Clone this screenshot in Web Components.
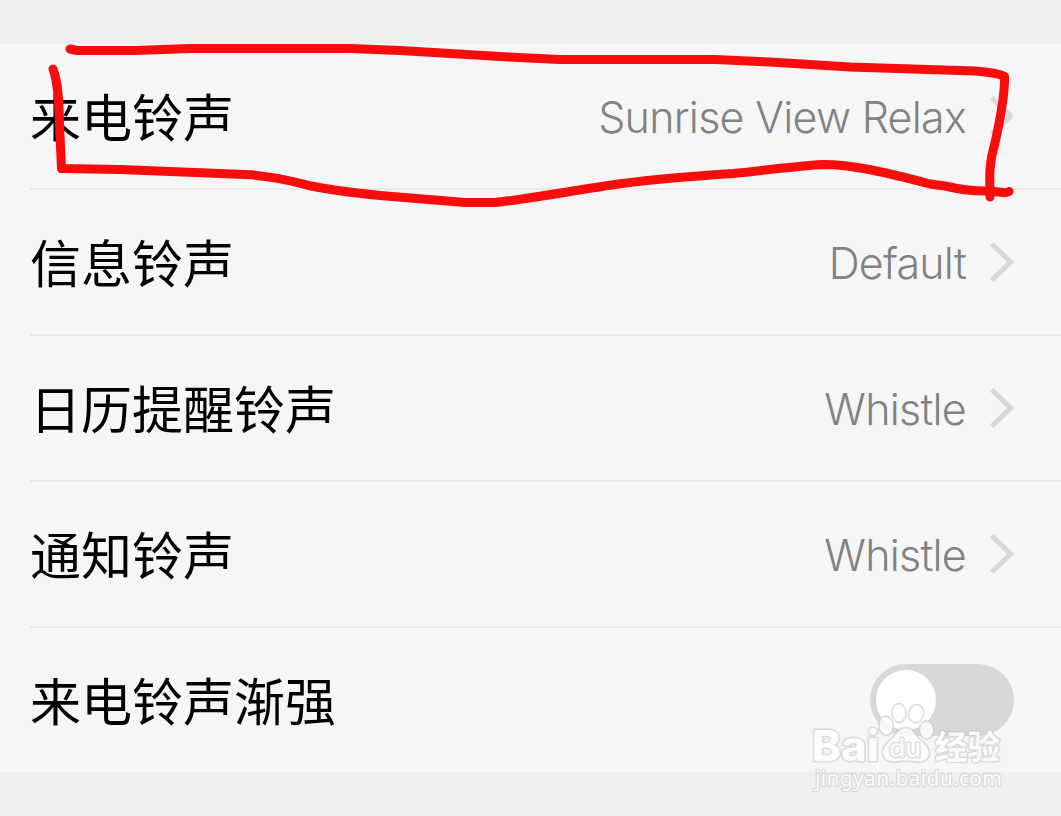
<!DOCTYPE html>
<html lang="zh-CN">
<head>
<meta charset="UTF-8">
<title>铃声设置</title>
<style>
  body {
    margin: 0;
    background: #efefef;
    font-family: Inter, "Noto Sans CJK SC", sans-serif;
  }
</style>
</head>
<body>
<ringtone-page>
  <setting-row label="来电铃声" value="Sunrise View Relax"></setting-row>
  <setting-row label="信息铃声" value="Default"></setting-row>
  <setting-row label="日历提醒铃声" value="Whistle"></setting-row>
  <setting-row label="通知铃声" value="Whistle"></setting-row>
  <setting-row label="来电铃声渐强"><toggle-switch></toggle-switch></setting-row>
  <red-marker slot="overlay"></red-marker>
  <site-watermark slot="overlay"></site-watermark>
</ringtone-page>

<script>
// Page shell: grey background with the list panel
class RingtonePage extends HTMLElement {
  constructor() {
    super();
    this.attachShadow({ mode: 'open' });
    this.shadowRoot.innerHTML = `
      <style>
        :host {
          display: block;
          position: relative;
          box-sizing: border-box;
          width: 1061px;
          height: 816px;
          padding: 44px 0;
          overflow: hidden;
          background: #efefef;
        }
        .list {
          display: flex;
          flex-direction: column;
          background: #f6f6f6;
        }
      </style>
      <div class="list"><slot></slot></div>
      <slot name="overlay"></slot>
    `;
  }
}
customElements.define('ringtone-page', RingtonePage);

// One row: label on the left, value + chevron or a control on the right
class SettingRow extends HTMLElement {
  constructor() {
    super();
    this.attachShadow({ mode: 'open' });
  }

  connectedCallback() {
    const label = this.getAttribute('label') || '';
    const value = this.getAttribute('value');

    const right = value ? `
      <span class="value">${value}</span>
      <svg class="chevron" width="24" height="40" viewBox="0 0 24 40">
        <path d="M1.8 1.8 L20.6 20 L1.8 38.2" fill="none" stroke="#d8d8d8" stroke-width="5"/>
      </svg>` : '<slot></slot>';

    this.shadowRoot.innerHTML = `
      <style>
        :host {
          display: block;
          padding-left: 30px;
        }
        .row {
          display: flex;
          align-items: center;
          justify-content: space-between;
          height: 144px;
          padding-right: 47px;
          border-bottom: 2px solid #e9e9e9;
        }
        :host(:last-of-type) .row {
          border-bottom: 0;
        }
        .label {
          font-family: "Noto Sans CJK SC", sans-serif;
          font-size: 51px;
          line-height: 72px;
          color: #000;
          white-space: nowrap;
          padding-bottom: 2px;
        }
        .right {
          display: flex;
          align-items: center;
        }
        .value {
          font-size: 43px;
          font-weight: 300;
          line-height: 60px;
          letter-spacing: -0.75px;
          color: #828282;
          white-space: nowrap;
          padding-top: 2px;
        }
        .chevron {
          display: block;
          margin-left: 24px;
        }
      </style>
      <div class="row">
        <span class="label">${label}</span>
        <div class="right">${right}</div>
      </div>
    `;
  }
}
customElements.define('setting-row', SettingRow);

// Toggle, off by default
class ToggleSwitch extends HTMLElement {
  constructor() {
    super();
    this.attachShadow({ mode: 'open' });
    this.shadowRoot.innerHTML = `
      <style>
        :host {
          display: flex;
          align-items: center;
          box-sizing: border-box;
          width: 144px;
          height: 72px;
          padding: 0 6px;
          border-radius: 36px;
          background: #d8d8d8;
        }
        .knob {
          width: 60px;
          height: 60px;
          border-radius: 50%;
          background: #fff;
        }
      </style>
      <div class="knob"></div>
    `;
  }
}
customElements.define('toggle-switch', ToggleSwitch);

// Hand-drawn red outline around the first row
class RedMarker extends HTMLElement {
  constructor() {
    super();
    this.attachShadow({ mode: 'open' });
    this.shadowRoot.innerHTML = `
      <style>
        :host {
          position: absolute;
          inset: 0;
          pointer-events: none;
        }
        svg { display: block; }
      </style>
      <svg width="1061" height="816" fill="none" stroke="#f80c0c" stroke-width="9" stroke-linecap="round" stroke-linejoin="round">
        <path d="M70 49 L77 50.5 L135 50.5 L190 48.5 L350 48.5 L400 50.5 L500 56.5 L560 59.5 L715 59.5 L770 62 L850 67 L975 71 C989 72 998 73 1004.500 76.500 C1005 96 999 125 994.500 145 C988 165 990 183 990 197"/>
        <path d="M53 69 C58 82 59 100 59.500 125 L61.500 168.500 L120 169.500 L245 174.500 C272 176 291 181 311 186 C331 190 355 193 380 195.500 L465 202.500 L495 202.500 C520 200 556 193.500 608 185.500 C648 179.500 694 176 733 173.500 C769 170 801 165.500 823 164.500 C852 164.500 885 172 930 184 L945 186 C960 189.500 975 191.500 990 191 L1003 192.500 Q1007 193 1009 191.500"/>
      </svg>
    `;
  }
}
customElements.define('red-marker', RedMarker);

// Translucent site logo in the bottom right corner
class SiteWatermark extends HTMLElement {
  constructor() {
    super();
    this.attachShadow({ mode: 'open' });
    this.shadowRoot.innerHTML = `
      <style>
        :host {
          position: absolute;
          left: 805px;
          top: 695px;
          pointer-events: none;
        }
        svg { display: block; }
        .mark {
          fill: #fff;
          fill-opacity: 0.78;
          stroke: #c4c4c4;
          stroke-opacity: 0.55;
          stroke-width: 1.8;
        }
        .words {
          fill-opacity: 0.9;
          stroke-width: 3;
        }
        text {
          paint-order: stroke;
          stroke-linejoin: round;
        }
      </style>
      <svg width="205" height="105" viewBox="805 695 205 105">
        <g class="mark">
          <ellipse cx="899" cy="713" rx="7" ry="9.500"/>
          <ellipse cx="916" cy="713.700" rx="7.500" ry="9.200" transform="rotate(12 916 713.700)"/>
          <ellipse cx="886" cy="725.700" rx="7.200" ry="9.500" transform="rotate(-8 886 725.700)"/>
          <ellipse cx="926.500" cy="730" rx="7.200" ry="9"/>
          <path d="M905.500 727.500 C912 727.500 915 733 918 737 C922 742 929.500 745 929.500 753 C929.500 760 923 763 916 762 C910 761 902 761 896 762 C888 763 882.500 759 882.500 752 C882.500 745 889 742 893 737 C896 733 899 727.500 905.500 727.500 Z"/>
        </g>
        <g class="mark words">
          <text x="812" y="761" font-family="Inter" font-size="42" font-weight="800" textLength="67" lengthAdjust="spacingAndGlyphs">Bai</text>
          <text x="889" y="757" font-family="Inter" font-size="25" font-weight="500" textLength="32" lengthAdjust="spacingAndGlyphs">du</text>
          <text x="935" y="759" font-family="Noto Sans CJK SC" font-size="33" font-weight="700" textLength="65" lengthAdjust="spacingAndGlyphs">经验</text>
          <text x="815" y="786" font-family="Noto Sans" font-size="21" font-weight="400" textLength="187" lengthAdjust="spacing" style="stroke-width: 2.400">jingyan.baidu.com</text>
        </g>
      </svg>
    `;
  }
}
customElements.define('site-watermark', SiteWatermark);
</script>
</body>
</html>
